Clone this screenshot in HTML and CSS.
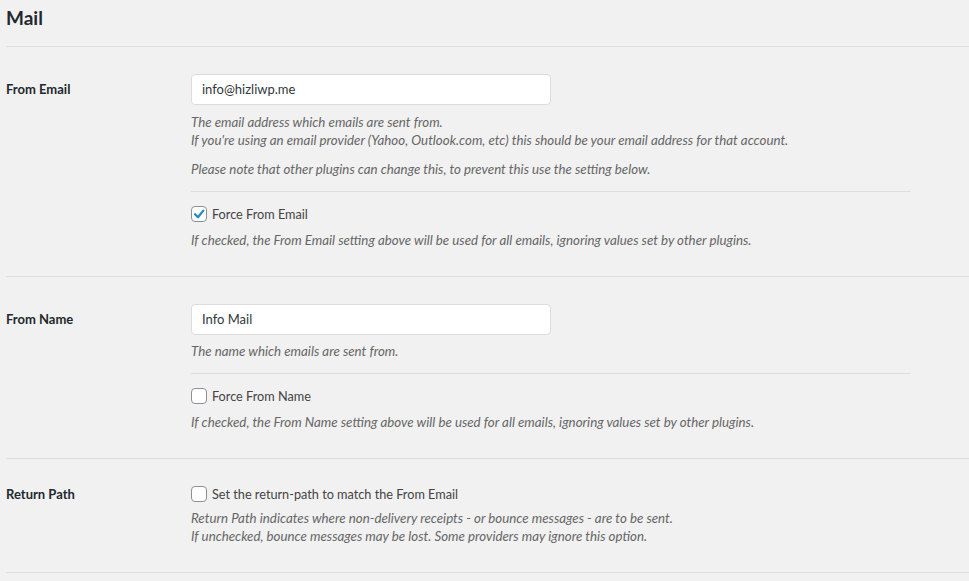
FILE: index.html
```html
<!DOCTYPE html>
<html lang="en">
<head>
<meta charset="utf-8">
<title>Mail</title>
<link rel="stylesheet" href="styles.css">
</head>
<body>
<div class="wrap">
  <h2 class="title">Mail</h2>

  <div class="row">
    <div class="label">From Email</div>
    <div class="field">
      <div class="input">info@hizliwp.me</div>
      <p class="desc first">The email address which emails are sent from.<br>If you're using an email provider (Yahoo, Outlook.com, etc) this should be your email address for that account.</p>
      <p class="desc gap">Please note that other plugins can change this, to prevent this use the setting below.</p>
      <div class="sep"></div>
      <div class="check">
        <span class="box checked"><svg width="14" height="14" viewBox="0 0 14 14"><path d="M3 7.2 L6 10.2 L11.3 3.6" fill="none" stroke="#1e8cbe" stroke-width="2.2" stroke-linecap="round" stroke-linejoin="round"/></svg></span>
        <span class="check-text">Force From Email</span>
      </div>
      <p class="desc after-check">If checked, the From Email setting above will be used for all emails, ignoring values set by other plugins.</p>
    </div>
  </div>

  <div class="row">
    <div class="label">From Name</div>
    <div class="field">
      <div class="input">Info Mail</div>
      <p class="desc first short">The name which emails are sent from.</p>
      <div class="sep"></div>
      <div class="check">
        <span class="box"></span>
        <span class="check-text">Force From Name</span>
      </div>
      <p class="desc after-check">If checked, the From Name setting above will be used for all emails, ignoring values set by other plugins.</p>
    </div>
  </div>

  <div class="row row-check">
    <div class="label">Return Path</div>
    <div class="field">
      <div class="check">
        <span class="box"></span>
        <span class="check-text">Set the return-path to match the From Email</span>
      </div>
      <p class="desc after-check tight">Return Path indicates where non-delivery receipts - or bounce messages - are to be sent.<br>If unchecked, bounce messages may be lost. Some providers may ignore this option.</p>
    </div>
  </div>
</div>
</body>
</html>
```

FILE: styles.css
```css
html, body {
  margin: 0;
  padding: 0;
  background: #f1f1f1;
}

body {
  font-family: "Lato", "Noto Sans", sans-serif;
  color: #444;
  font-size: 13px;
}

.wrap {
  padding-left: 6px;
}

.title {
  margin: 0;
  padding: 6px 0 16px;
  font-size: 19px;
  line-height: 24px;
  font-weight: 700;
  color: #23282d;
  border-bottom: 1px solid #dedede;
}

.row {
  display: grid;
  grid-template-columns: 185px 720px;
  padding: 27px 0 27px;
  border-bottom: 1px solid #dedede;
}

.row-check {
  padding-top: 25px;
}

.label {
  font-size: 13px;
  font-weight: 700;
  line-height: 31px;
  color: #23282d;
}

.row-check .label {
  line-height: 20px;
}

.field {
  display: flex;
  flex-direction: column;
}

.input {
  box-sizing: border-box;
  width: 360px;
  height: 31px;
  padding: 0 10px;
  background: #fff;
  border: 1px solid #dcdcdc;
  border-radius: 4px;
  font-size: 13px;
  line-height: 29px;
  color: #32373c;
}

.desc {
  margin: 0;
  font-size: 13.3px;
  line-height: 18px;
  font-style: italic;
  color: #666;
}

.desc.first {
  margin-top: 8px;
}

.desc.first.short {
  margin-top: 7px;
}

.desc.gap {
  margin-top: 11px;
}

.sep {
  height: 0;
  margin-top: 13px;
  border-top: 1px solid #dedede;
}

.check {
  display: flex;
  align-items: center;
  height: 20px;
  margin-top: 12px;
}

.row-check .check {
  margin-top: 0;
}

.box {
  box-sizing: border-box;
  width: 16px;
  height: 16px;
  border: 1px solid #8c8f94;
  border-radius: 4px;
  background: #fff;
  display: flex;
  align-items: center;
  justify-content: center;
  flex: none;
}

.check-text {
  margin-left: 5px;
  font-size: 12.7px;
  color: #444;
}

.desc.after-check {
  margin-top: 7px;
}

.desc.tight {
  margin-top: 5px;
}
```
